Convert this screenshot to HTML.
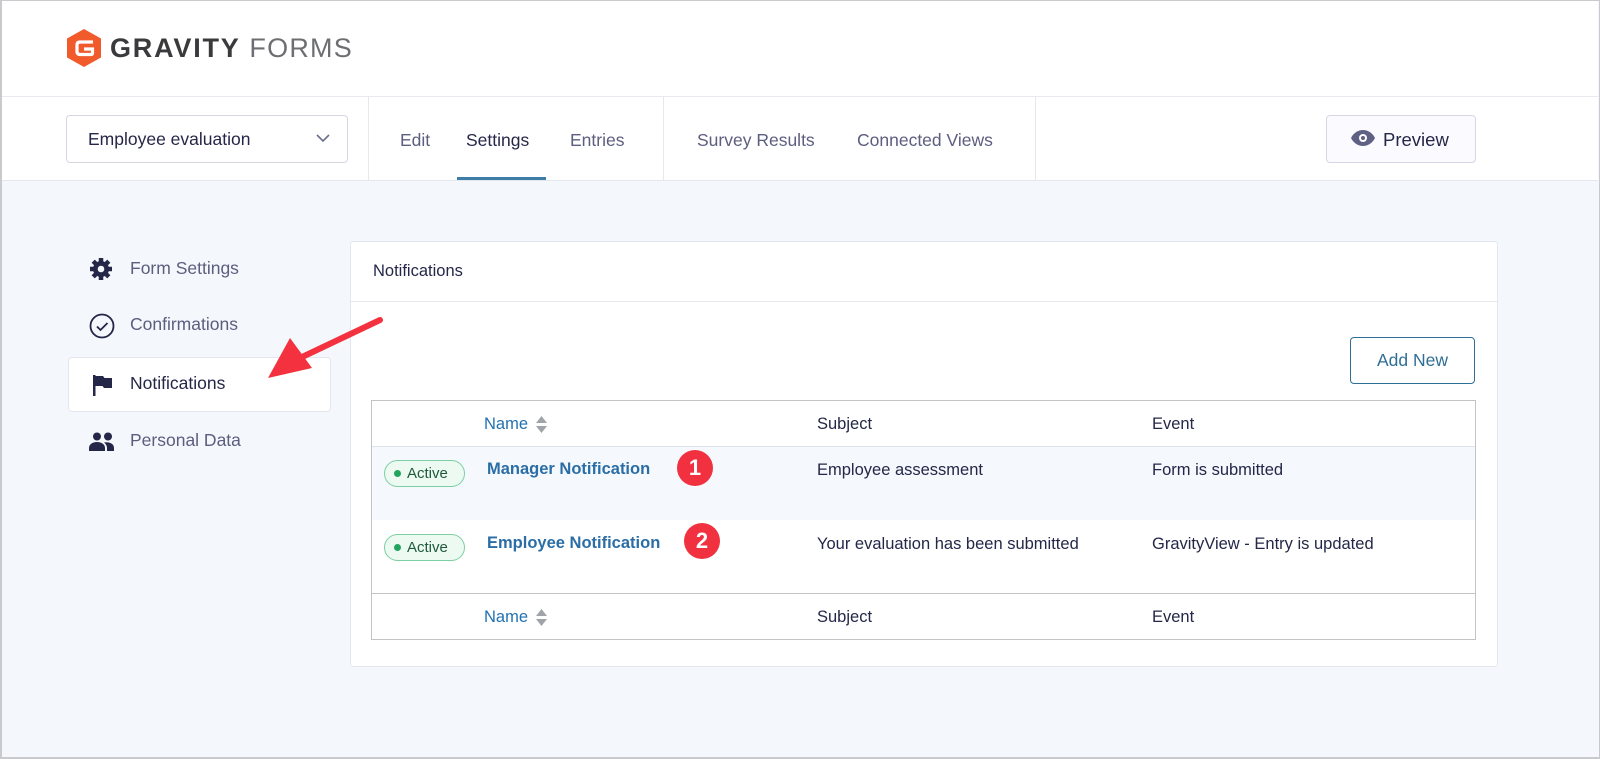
<!DOCTYPE html>
<html><head><meta charset="utf-8"><style>
*{box-sizing:border-box;margin:0;padding:0}
body{width:1600px;height:759px;overflow:hidden;font-family:"Liberation Sans",sans-serif;background:#f4f7fb;}
.frame{position:absolute;left:0;top:0;width:1600px;height:759px;border:2px solid #c9cacd;border-top:1px solid #c9cacd;border-right:1px solid #c9cacd;z-index:20}
.abs{position:absolute}
.hdr{left:2px;top:1px;width:1596px;height:96px;background:#fff;border-bottom:1px solid #e8eaf0}
.nav{left:2px;top:97px;width:1596px;height:84px;background:#fff;border-bottom:1px solid #e3e6ee}
.t{font-size:17.5px;color:#242748}
.m{color:#5b5e7e}
.link{color:#2271b1}
.s{font-size:16.5px}
</style></head><body>
<div class="abs hdr"></div>
<svg class="abs" style="left:66px;top:29px" width="36" height="38" viewBox="0 0 36 38"><polygon points="18,0 35,9.5 35,28.5 18,38 1,28.5 1,9.5" fill="#f15a2b"/><path d="M27 13H14c-2 0-3 1-3 3v7c0 1.5 1 2.5 3 2.5h11c1 0 1.5-.5 1.5-1.5v-4H18" fill="none" stroke="#fff" stroke-width="3.2"/></svg>
<div class="abs" style="left:110px;top:33px;font-size:27px;font-weight:bold;color:#3a3a3c;letter-spacing:1.8px">GRAVITY <span style="font-weight:normal;color:#6d6e71;letter-spacing:1.2px">FORMS</span></div>
<div class="abs nav"></div>
<div class="abs" style="left:66px;top:115px;width:282px;height:48px;border:1px solid #d5d7e0;border-radius:4px;background:#fff"></div>
<div class="abs t" style="left:88px;top:129px">Employee evaluation</div>
<svg class="abs" style="left:316px;top:133px" width="14" height="10"><path d="M1 2l6 6 6-6" fill="none" stroke="#6b6e8a" stroke-width="1.6"/></svg>
<div class="abs" style="left:368px;top:97px;width:1px;height:84px;background:#e6e8ee"></div>
<div class="abs" style="left:663px;top:97px;width:1px;height:84px;background:#e6e8ee"></div>
<div class="abs" style="left:1035px;top:97px;width:1px;height:84px;background:#e6e8ee"></div>
<div class="abs t m" style="left:400px;top:130px">Edit</div>
<div class="abs t" style="left:466px;top:130px">Settings</div>
<div class="abs" style="left:457px;top:177px;width:89px;height:3px;background:#3e7da6"></div>
<div class="abs t m" style="left:570px;top:130px">Entries</div>
<div class="abs t m" style="left:697px;top:130px">Survey Results</div>
<div class="abs t m" style="left:857px;top:130px">Connected Views</div>
<div class="abs" style="left:1326px;top:115px;width:150px;height:48px;border:1px solid #d5d7e6;border-radius:4px;background:#fbfbff"></div>
<svg class="abs" style="left:1351px;top:130px" width="24" height="16" viewBox="0 0 24 16"><path d="M0 8C3 2 8 0 12 0s9 2 12 8c-3 6-8 8-12 8S3 14 0 8z" fill="#5f6184"/><circle cx="12" cy="8" r="4" fill="#fff"/><circle cx="12" cy="8" r="2" fill="#5f6184"/></svg>
<div class="abs t" style="left:1383px;top:129px;font-size:18.5px">Preview</div>

<svg class="abs" style="left:89px;top:257px" width="24" height="24" viewBox="0 0 24 24"><g fill="#242748"><circle cx="12" cy="12" r="8"/><g stroke="#242748" stroke-width="4.5"><path d="M12 1v22M1 12h22M4.2 4.2l15.6 15.6M19.8 4.2L4.2 19.8"/></g></g><circle cx="12" cy="12" r="3.3" fill="#f4f7fb"/></svg>
<div class="abs t m" style="left:130px;top:258px">Form Settings</div>
<svg class="abs" style="left:89px;top:313px" width="26" height="26"><circle cx="13" cy="13" r="11.5" fill="none" stroke="#242748" stroke-width="1.8"/><path d="M8 13.5l3.5 3.5 7-7" fill="none" stroke="#242748" stroke-width="1.8"/></svg>
<div class="abs t m" style="left:130px;top:314px">Confirmations</div>
<div class="abs" style="left:68px;top:357px;width:263px;height:55px;background:#fff;border:1px solid #e3e6ee;border-radius:4px"></div>
<svg class="abs" style="left:93px;top:375px" width="20" height="21"><rect x="0" y="0" width="2.5" height="21" fill="#242748"/><path d="M2 1h8l1.5 2H19v10h-8l-1.5-2H2z" fill="#242748"/></svg>
<div class="abs t" style="left:130px;top:373px">Notifications</div>
<svg class="abs" style="left:89px;top:432px" width="26" height="20"><circle cx="8" cy="4.5" r="4" fill="#242748"/><circle cx="19" cy="4.5" r="4" fill="#242748"/><path d="M0 19v-3c0-4 4-6 8-6s8 2 8 6v3z M15 10.5c5-1 10 1 10 5.5v3h-7v-3c0-2-1-4-3-5.5z" fill="#242748"/></svg>
<div class="abs t m" style="left:130px;top:430px">Personal Data</div>

<div class="abs" style="left:350px;top:241px;width:1148px;height:426px;background:#fff;border:1px solid #e3e6ee;border-radius:3px"></div>
<div class="abs" style="left:351px;top:301px;width:1146px;height:1px;background:#e6e8ee"></div>
<div class="abs t" style="left:373px;top:262px;font-size:16.5px">Notifications</div>
<div class="abs" style="left:1350px;top:337px;width:125px;height:47px;border:1px solid #2f6f95;border-radius:4px;color:#2f6f95;font-size:17.5px;text-align:center;line-height:45px">Add New</div>

<svg class="abs" style="left:260px;top:312px;z-index:10" width="130" height="72"><path d="M120 8L40 46" stroke="#f4323f" stroke-width="6" stroke-linecap="round"/><polygon points="8,66 30,26 52,56" fill="#f4323f"/></svg>

<div class="abs" style="left:371px;top:400px;width:1105px;height:240px;border:1px solid #c3c4c7;background:#fff"></div>
<div class="abs" style="left:372px;top:446px;width:1103px;height:74px;background:#f5f8fc;border-top:1px solid #dde1ea"></div>
<div class="abs" style="left:372px;top:593px;width:1103px;height:1px;background:#c3c4c7"></div>
<div class="abs link s" style="left:484px;top:415px">Name</div>
<svg class="abs" style="left:535px;top:415px" width="13" height="19"><path d="M6.5 1l5.5 7H1z M6.5 18L1 11h11z" fill="#a0a3aa"/></svg>
<div class="abs t s" style="left:817px;top:415px">Subject</div>
<div class="abs t s" style="left:1152px;top:415px">Event</div>
<div class="abs link s" style="left:484px;top:608px">Name</div>
<svg class="abs" style="left:535px;top:608px" width="13" height="19"><path d="M6.5 1l5.5 7H1z M6.5 18L1 11h11z" fill="#a0a3aa"/></svg>
<div class="abs t s" style="left:817px;top:608px">Subject</div>
<div class="abs t s" style="left:1152px;top:608px">Event</div>

<div class="abs" style="left:384px;top:460px;width:81px;height:27px;border:1px solid #7ccfa3;border-radius:14px;background:#edfaf2;font-size:15px;color:#1e5a3c;line-height:25px;padding-left:22px">Active</div>
<div class="abs" style="left:394px;top:470px;width:7px;height:7px;border-radius:50%;background:#23a45d"></div>
<div class="abs" style="left:384px;top:534px;width:81px;height:27px;border:1px solid #7ccfa3;border-radius:14px;background:#edfaf2;font-size:15px;color:#1e5a3c;line-height:25px;padding-left:22px">Active</div>
<div class="abs" style="left:394px;top:544px;width:7px;height:7px;border-radius:50%;background:#23a45d"></div>
<div class="abs" style="left:487px;top:460px;font-size:16.5px;font-weight:bold;color:#2b6ea6">Manager Notification</div>
<div class="abs" style="left:487px;top:534px;font-size:16.5px;font-weight:bold;color:#2b6ea6">Employee Notification</div>
<div class="abs" style="left:677px;top:450px;width:36px;height:36px;border-radius:50%;background:#f1313f;color:#fff;font-weight:bold;font-size:22px;text-align:center;line-height:36px">1</div>
<div class="abs" style="left:684px;top:523px;width:36px;height:36px;border-radius:50%;background:#f1313f;color:#fff;font-weight:bold;font-size:22px;text-align:center;line-height:36px">2</div>
<div class="abs t s" style="left:817px;top:461px">Employee assessment</div>
<div class="abs t s" style="left:1152px;top:461px">Form is submitted</div>
<div class="abs t s" style="left:817px;top:535px">Your evaluation has been submitted</div>
<div class="abs t s" style="left:1152px;top:535px">GravityView - Entry is updated</div>
<div class="frame"></div>
</body></html>
